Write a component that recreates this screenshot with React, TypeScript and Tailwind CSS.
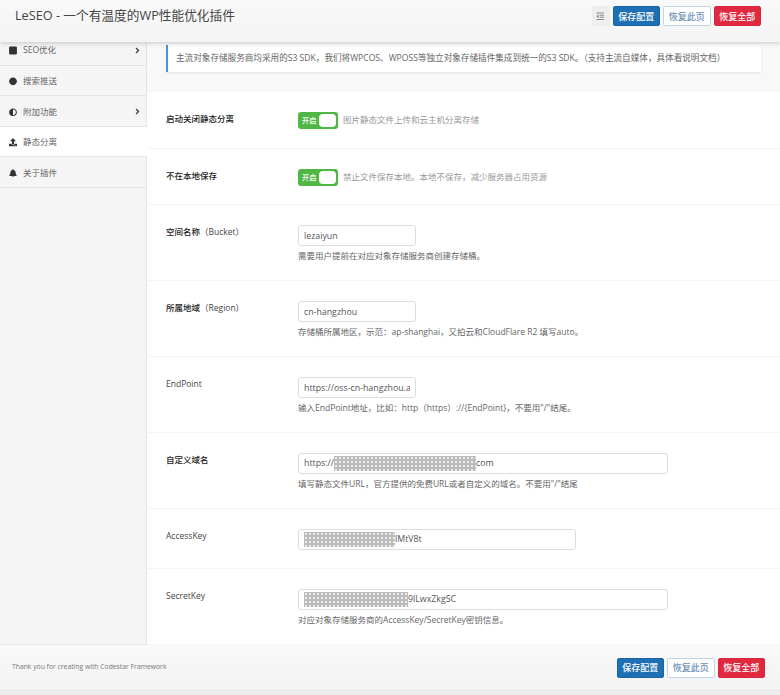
import type { ReactNode } from "react";
import { FaStop, FaCircle, FaAdjust, FaUpload, FaBell, FaAngleRight, FaOutdent } from "react-icons/fa";

const font = { fontFamily: '"Open Sans","Noto Sans CJK SC",sans-serif' };

function Btn({ kind, children }: { kind: string; children: string }) {
  const cls =
    kind === "save"
      ? "bg-[#1e6fb3] border-[#1a64a3] text-white"
      : kind === "reset"
      ? "bg-white border-[#c3d4e6] text-[#6c8fb5]"
      : "bg-[#e0293f] border-[#d9263c] text-white";
  return (
    <button className={`h-[20px] w-[47.5px] rounded-[2px] border text-[9px] leading-none font-medium ${cls}`}>{children}</button>
  );
}

function NavItem({ icon, label, arrow, active }: { icon: ReactNode; label: string; arrow?: boolean; active?: boolean }) {
  return (
    <div className={`flex h-[30.6px] items-center border-b border-[#e5e5e5] pl-[9px] pr-[4px] pt-[2px] text-[8.5px] text-[#666] ${active ? "relative -mr-px bg-white text-[#555]" : ""}`}>
      <span className="flex w-[8px] justify-center text-[#333]">{icon}</span>
      <span className="ml-[6px] flex-1">{label}</span>
      {arrow && <FaAngleRight className="text-[9px] text-[#444]" />}
    </div>
  );
}

function Toggle() {
  return (
    <div className="flex h-[17px] w-[40px] items-center justify-between rounded-[3px] bg-[#4fb845] pl-[4px] pr-[2px]">
      <span className="text-[7.2px] font-medium text-white">开启</span>
      <span className="h-[13px] w-[17px] rounded-[4px] bg-white" />
    </div>
  );
}

function Mask({ w }: { w: number }) {
  return (
    <span
      className="inline-block h-[15px] shrink-0 bg-[#bbbbbb] bg-[radial-gradient(#ececec_0.7px,transparent_0.9px)] bg-[length:4px_4px]"
      style={{ width: w }}
    />
  );
}

function Row({ label, bold, h, children }: { label: ReactNode; bold?: boolean; h: string; children: ReactNode }) {
  return (
    <div className={`flex border-b border-[#f5f5f5] pl-[19px] ${h}`}>
      <div className={`w-[132px] text-[8.5px] leading-[14px] ${bold ? "font-medium text-[#222]" : "text-[#444]"}`}>{label}</div>
      <div className="flex-1">{children}</div>
    </div>
  );
}

function Help({ children }: { children: string }) {
  return <p className="mt-[3px] text-[8.5px] leading-[14px] text-[#666]">{children}</p>;
}

function Input({ w, value }: { w: string; value: string }) {
  return (
    <input
      readOnly
      value={value}
      className={`block h-[21px] ${w} rounded-[3px] border border-[#ddd] bg-white px-[5px] text-[8.8px] text-[#555] outline-none`}
    />
  );
}

function Masked({ w, before, mask, after }: { w: string; before?: string; mask: number; after: string }) {
  return (
    <div className={`flex h-[21px] ${w} items-center overflow-hidden rounded-[3px] border border-[#ddd] bg-white px-[5px] text-[8.8px] whitespace-nowrap text-[#555]`}>
      {before && <span>{before}</span>}
      <Mask w={mask} />
      <span>{after}</span>
    </div>
  );
}

export default function App() {
  return (
    <div style={font} className="flex h-[695px] w-[780px] flex-col overflow-hidden bg-[#eee]">
      <header className="relative z-10 flex h-[42px] shrink-0 items-start justify-between bg-gradient-to-b from-[#f9f9f9] to-[#f4f4f4] pl-[15px] pr-[19px] pt-[6px] shadow-[0_1px_5px_rgba(0,0,0,0.2)]">
        <h1 className="text-[12.7px] leading-[19px] font-normal text-[#444]">LeSEO - 一个有温度的WP性能优化插件</h1>
        <div className="flex items-center gap-[3px]">
          <span className="flex h-[20px] w-[18px] items-center justify-center rounded-[2px] bg-[#eee] text-[#888]">
            <FaOutdent className="text-[8.5px]" />
          </span>
          <Btn kind="save">保存配置</Btn>
          <Btn kind="reset">恢复此页</Btn>
          <Btn kind="all">恢复全部</Btn>
        </div>
      </header>

      <div className="flex min-h-0 flex-1 border-b border-[#e5e5e5] bg-white">
        <nav className="w-[147px] shrink-0 border-r border-[#e5e5e5] bg-[#f5f5f5]">
          <div className="-mt-[7px]">
            <NavItem icon={<FaStop className="text-[9px]" />} label="SEO优化" arrow />
            <NavItem icon={<FaCircle className="text-[8.5px]" />} label="搜索推送" />
            <NavItem icon={<FaAdjust className="text-[8.5px]" />} label="附加功能" arrow />
            <NavItem icon={<FaUpload className="text-[8.5px]" />} label="静态分离" active />
            <NavItem icon={<FaBell className="text-[8.5px]" />} label="关于插件" />
          </div>
        </nav>
        <main className="min-w-0 flex-1">
          <div className="h-[50px] bg-[#f8f8f8] pl-[19px] pr-[19px] pt-[3px]">
            <div className="flex h-[27px] items-center border-l-[2px] border-[#3d9bd8] bg-white pl-[8px] text-[8.6px] whitespace-nowrap text-[#666] shadow-[0_1px_2px_rgba(0,0,0,0.08)]">
              主流对象存储服务商均采用的S3 SDK，我们将WPCOS、WPOSS等独立对象存储插件集成到统一的S3 SDK。（支持主流自媒体，具体看说明文档）
            </div>
          </div>
          <Row label="启动关闭静态分离" bold h="h-[56.5px] pt-[20px]">
            <div className="flex items-center gap-[5px]">
              <Toggle />
              <span className="text-[8.5px] text-[#999]">图片静态文件上传和云主机分离存储</span>
            </div>
          </Row>
          <Row label="不在本地保存" bold h="h-[56.5px] pt-[20px]">
            <div className="flex items-center gap-[5px]">
              <Toggle />
              <span className="text-[8.5px] text-[#999]">禁止文件保存本地。本地不保存，减少服务器占用资源</span>
            </div>
          </Row>
          <Row label={<><b className="font-medium text-[#222]">空间名称</b>（Bucket）</>} h="h-[76px] pt-[20px]">
            <Input w="w-[118px]" value="lezaiyun" />
            <Help>需要用户提前在对应对象存储服务商创建存储桶。</Help>
          </Row>
          <Row label={<><b className="font-medium text-[#222]">所属地域</b>（Region）</>} h="h-[76px] pt-[20px]">
            <Input w="w-[118px]" value="cn-hangzhou" />
            <Help>存储桶所属地区，示范：ap-shanghai，又拍云和CloudFlare R2 填写auto。</Help>
          </Row>
          <Row label="EndPoint" h="h-[76px] pt-[20px]">
            <Input w="w-[118px]" value="https://oss-cn-hangzhou.aliyuncs.com" />
            <Help>{'输入EndPoint地址，比如：http（https）://{EndPoint}，不要用"/"结尾。'}</Help>
          </Row>
          <Row label="自定义域名" bold h="h-[76px] pt-[20px]">
            <Masked w="w-[370px]" before="https://" mask={142} after="com" />
            <Help>填写静态文件URL，官方提供的免费URL或者自定义的域名。不要用"/"结尾</Help>
          </Row>
          <Row label="AccessKey" h="h-[60px] pt-[20px]">
            <Masked w="w-[278px]" mask={91} after="lMtV8t" />
          </Row>
          <Row label="SecretKey" h="h-[76px] pt-[20px]">
            <Masked w="w-[370px]" mask={104} after="9lLwxZkgSC" />
            <Help>对应对象存储服务商的AccessKey/SecretKey密钥信息。</Help>
          </Row>
        </main>
      </div>

      <footer className="mb-[4px] flex h-[46px] shrink-0 items-center justify-between border-b border-[#e5e5e5] bg-gradient-to-b from-[#f9f9f9] to-[#f3f3f3] pl-[12px] pr-[15px]">
        <span className="text-[6.8px] text-[#777]">Thank you for creating with Codestar Framework</span>
        <div className="flex items-center gap-[3px]">
          <Btn kind="save">保存配置</Btn>
          <Btn kind="reset">恢复此页</Btn>
          <Btn kind="all">恢复全部</Btn>
        </div>
      </footer>
    </div>
  );
}
